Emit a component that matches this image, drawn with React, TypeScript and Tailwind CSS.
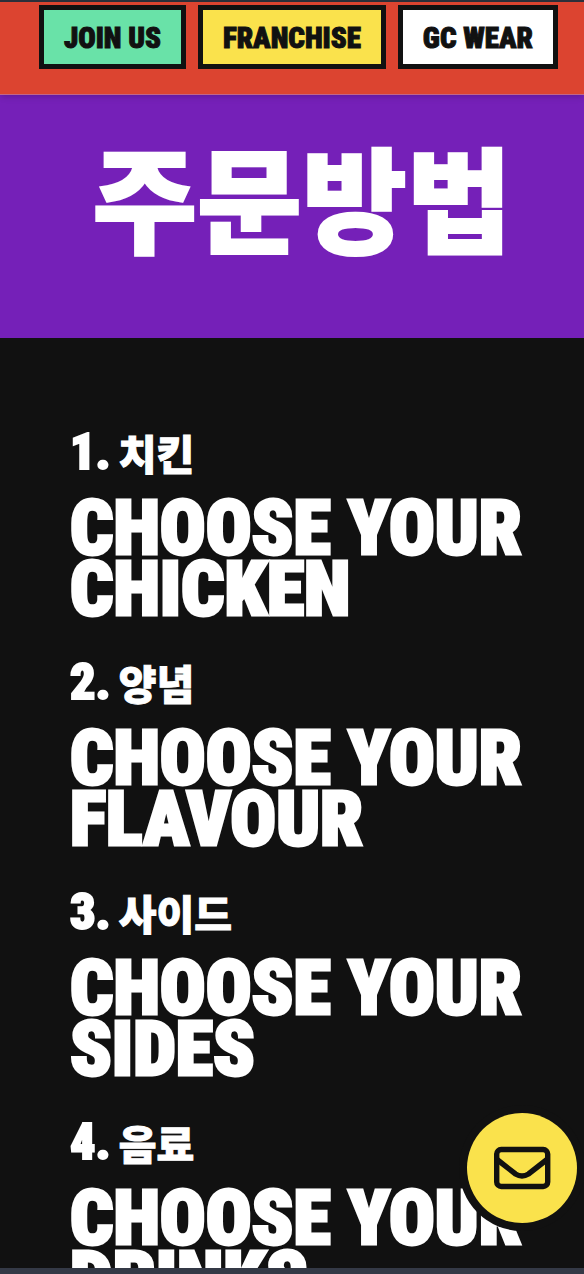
const heavy = "font-['Roboto_Condensed','Roboto','Noto_Sans_CJK_KR',sans-serif]";
const korean = "font-['Noto_Sans_CJK_KR',sans-serif]";

const links = [
  { label: 'JOIN US', color: 'bg-[#69e2a8]' },
  { label: 'FRANCHISE', color: 'bg-[#fae24c]' },
  { label: 'GC WEAR', color: 'bg-white' },
];

const steps = [
  { number: 1, name: '치킨', title: 'CHICKEN' },
  { number: 2, name: '양념', title: 'FLAVOUR' },
  { number: 3, name: '사이드', title: 'SIDES' },
  { number: 4, name: '음료', title: 'DRINKS' },
];

function Mail() {
  return (
    <svg viewBox="0 0 58 44" className="h-11 w-[58px]" fill="none" stroke="#111" strokeWidth="5.4" aria-hidden="true">
      <rect x="3.700" y="3.500" width="51" height="37" rx="4.5" />
      <path d="M4 13.500 L22.500 28 Q29 32 35.500 28 L54 13.500" />
    </svg>
  );
}

export default function App() {
  return (
    <div className={`relative flex h-screen flex-col overflow-hidden border-t-2 border-b-6 border-t-[#2b2f3a] border-b-[#343946] bg-[#111] ${heavy}`}>
      <header className="relative z-10 border-b border-[#c0668a] bg-[#dc4430] pt-[3px] pb-[25px] shadow-md">
        <nav className="flex justify-end gap-3 pr-[26px]">
          {links.map((l) => (
            <a
              key={l.label}
              href="#"
              className={`flex h-16 items-center border-[5px] border-[#111] px-5 pt-1 text-[29px] font-black whitespace-nowrap text-[#111] [-webkit-text-stroke:1px_#111] ${l.color}`}
            >
              {l.label}
            </a>
          ))}
        </nav>
      </header>
      <main className="min-h-0 flex-1 overflow-hidden text-white">
        <h1 className={`flex h-[243px] items-center justify-center bg-[#7520b8] pb-11 pl-5 text-[114px] leading-none font-black [-webkit-text-stroke:2px_#fff] ${korean}`}>
          주문방법
        </h1>
        <ol className="flex flex-col gap-8 px-[70px] pt-[84px]">
          {steps.map((s) => (
            <li key={s.number}>
              <h2 className="flex h-16 items-center gap-2 pb-1 text-[50px] leading-none font-black">
                <span className="[-webkit-text-stroke:2px_#fff]">{s.number}.</span>
                <span className={`text-[41px] leading-none [-webkit-text-stroke:1px_#fff] ${korean}`}>{s.name}</span>
              </h2>
              <p className="pt-3 text-[76px] leading-[61px] font-black [-webkit-text-stroke:3px_#fff]">
                <span className="block whitespace-nowrap">CHOOSE YOUR</span>
                <span className="block">{s.title}</span>
              </p>
            </li>
          ))}
        </ol>
      </main>
      <button
        type="button"
        aria-label="Email"
        className="absolute right-[7px] bottom-[45px] z-20 flex size-[110px] items-center justify-center rounded-full bg-[#fae24c] ring-8 ring-[#111]"
      >
        <Mail />
      </button>
    </div>
  );
}
